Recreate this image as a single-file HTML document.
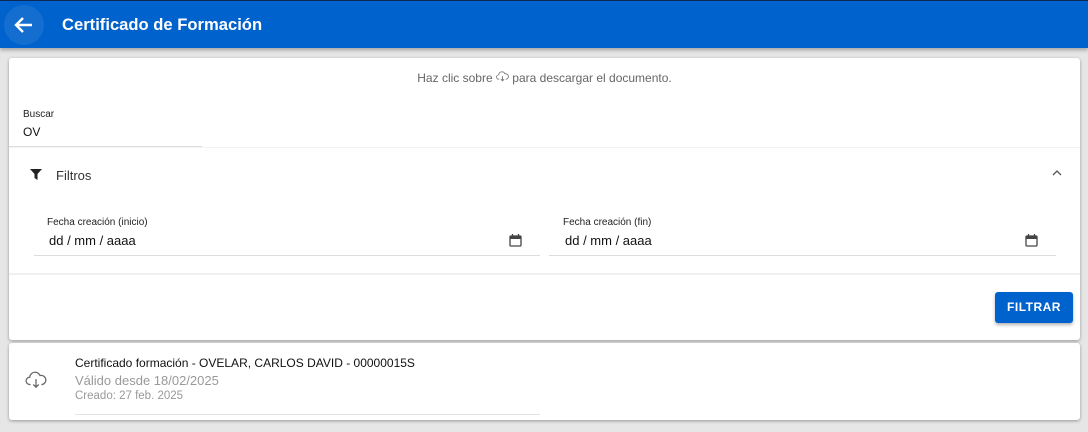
<!DOCTYPE html>
<html><head><meta charset="utf-8"><style>
*{box-sizing:border-box;margin:0;padding:0}
body{width:1088px;height:432px;background:#e6e6e6;font-family:"Liberation Sans",sans-serif;position:relative;overflow:hidden}
.hdr{position:absolute;left:0;top:0;width:1088px;height:48px;background:#0062cc;border-top:1px solid #0a2a55;box-shadow:0 2px 4px rgba(0,0,0,.3)}
.back{position:absolute;left:4px;top:4px;width:40px;height:40px;border-radius:50%;background:rgba(255,255,255,.08)}
.title{position:absolute;left:62px;top:14px;color:#fff;font-size:16.6px;font-weight:bold}
.card{position:absolute;left:9px;width:1071px;background:#fff;border-radius:3px;box-shadow:0 1px 3px rgba(0,0,0,.35)}
.abs{position:absolute}
</style></head><body>
<div class="hdr"><div class="back"><svg width="40" height="40" viewBox="0 0 40 40"><path d="M28 20H13M19 13l-7 7 7 7" stroke="#fff" stroke-width="2.4" fill="none"/></svg></div><div class="title">Certificado de Formación</div></div>
<div class="card" style="top:58px;height:282px">
 <div class="abs" style="left:0;width:1071px;top:13px;text-align:center;font-size:12px;color:#666">Haz clic sobre <svg width="13" height="11" viewBox="0 0 24 20" style="vertical-align:0"><path d="M6 15H5a4 4 0 010-8 6 6 0 0111.5-2A4.5 4.5 0 0119 15h-1M12 9v9M9 15l3 3 3-3" stroke="#777" stroke-width="1.6" fill="none"/></svg> para descargar el documento.</div>
 <div class="abs" style="left:14px;top:51px;font-size:10px;color:#222">Buscar</div>
 <div class="abs" style="left:14px;top:67px;font-size:12px;color:#111">OV</div>
 <div class="abs" style="left:0;top:88px;width:193px;height:1px;background:#ddd"></div>
 <div class="abs" style="left:0;top:89px;width:1071px;height:1px;background:#f3f3f3"></div>
 <svg class="abs" style="left:21px;top:111px" width="12" height="11" viewBox="0 0 12 11"><path d="M0 0h12L7.5 5v6L4.5 9V5z" fill="#222"/></svg>
 <div class="abs" style="left:47px;top:110px;font-size:13px;color:#333">Filtros</div>
 <svg class="abs" style="left:1043px;top:111px" width="10" height="7"><path d="M1 6l4-4 4 4" stroke="#555" stroke-width="1.3" fill="none"/></svg>
 <div class="abs" style="left:38px;top:159px;font-size:10px;color:#222">Fecha creación (inicio)</div>
 <div class="abs" style="left:40px;top:175px;font-size:13px;color:#111">dd / mm / aaaa</div>
 <div class="abs" style="left:25px;top:197px;width:506px;height:1px;background:#ddd"></div>
 <div class="abs" style="left:554px;top:159px;font-size:10px;color:#222">Fecha creación (fin)</div>
 <div class="abs" style="left:556px;top:175px;font-size:13px;color:#111">dd / mm / aaaa</div>
 <div class="abs" style="left:540px;top:197px;width:507px;height:1px;background:#ddd"></div>
 <svg class="abs" style="left:500px;top:176px" width="13" height="13" viewBox="0 0 13 13"><rect x="1" y="2" width="11" height="10" rx="1" stroke="#444" stroke-width="1.3" fill="none"/><rect x="1" y="2" width="11" height="3" fill="#444"/><path d="M3.5 0v3M9.5 0v3" stroke="#444" stroke-width="1.3"/></svg>
 <svg class="abs" style="left:1016px;top:176px" width="13" height="13" viewBox="0 0 13 13"><rect x="1" y="2" width="11" height="10" rx="1" stroke="#444" stroke-width="1.3" fill="none"/><rect x="1" y="2" width="11" height="3" fill="#444"/><path d="M3.5 0v3M9.5 0v3" stroke="#444" stroke-width="1.3"/></svg>
 <div class="abs" style="left:0;top:215px;width:1071px;height:2px;background:#f0f0f0"></div>
 <div class="abs" style="left:986px;top:234px;width:78px;height:31px;background:#0062cc;border-radius:3px;box-shadow:0 2px 3px rgba(0,0,0,.3);color:#fff;font-size:12px;font-weight:bold;text-align:center;line-height:31px;letter-spacing:.5px">FILTRAR</div>
</div>
<div class="card" style="top:343px;height:77px">
 <svg class="abs" style="left:16px;top:28px" width="22" height="18" viewBox="0 0 24 20"><path d="M6 15H5a4 4 0 010-8 6 6 0 0111.5-2A4.5 4.5 0 0119 15h-1M12 9v9M9 15l3 3 3-3" stroke="#666" stroke-width="1.4" fill="none"/></svg>
 <div class="abs" style="left:66px;top:13px;font-size:12px;color:#111">Certificado formación - OVELAR, CARLOS DAVID - 00000015S</div>
 <div class="abs" style="left:66px;top:30px;font-size:13px;color:#999">Válido desde 18/02/2025</div>
 <div class="abs" style="left:66px;top:47px;font-size:11.5px;color:#999">Creado: 27 feb. 2025</div>
 <div class="abs" style="left:66px;top:71px;width:465px;height:1px;background:#e3e3e3"></div>
</div>
</body></html>
